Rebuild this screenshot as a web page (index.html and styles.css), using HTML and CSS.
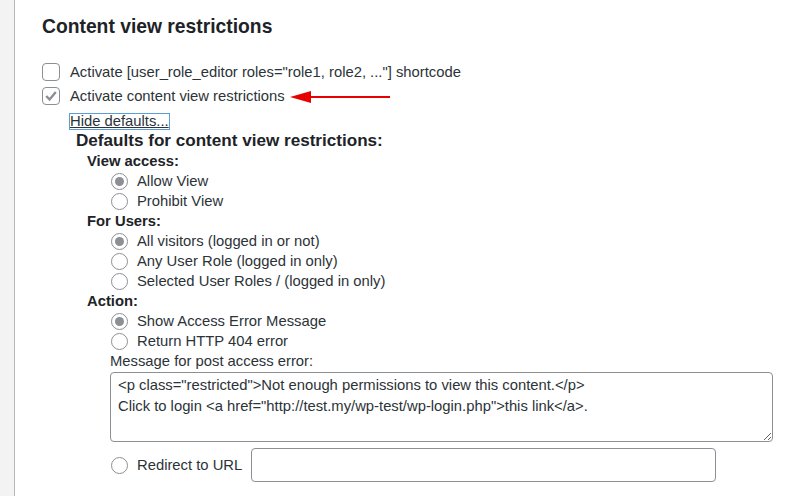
FILE: index.html
```html
<!DOCTYPE html>
<html>
<head>
	<meta charset="utf-8">
	<title>Content view restrictions</title>
	<link rel="stylesheet" href="styles.css">
</head>
<body>
<div id="page">
	<div id="sidebar"></div>
	<div id="content">
		<h2>Content view restrictions</h2>

		<div class="check-row">
			<span class="checkbox"></span>
			<span>Activate [user_role_editor roles="role1, role2, ..."] shortcode</span>
		</div>
		<div class="check-row">
			<span class="checkbox checked">
				<svg width="14" height="14" viewBox="0 0 14 14"><path d="M2.2 7 L5.6 10.4 L11.8 3" fill="none" stroke="#8c8f94" stroke-width="2.4"/></svg>
			</span>
			<span>Activate content view restrictions</span>
			<svg class="arrow" width="102" height="14" viewBox="0 0 102 14"><polygon points="0,7 21,1 21,13" fill="#e60000"/><rect x="20" y="6" width="80" height="2" fill="#e60000"/></svg>
		</div>

		<div id="defaults">
			<div class="row"><span class="toggle">Hide defaults...</span></div>
			<div class="row heading">Defaults for content view restrictions:</div>

			<div class="row group">View access:</div>
			<div class="row opt"><span class="radio checked"></span>Allow View</div>
			<div class="row opt"><span class="radio"></span>Prohibit View</div>

			<div class="row group">For Users:</div>
			<div class="row opt"><span class="radio checked"></span>All visitors (logged in or not)</div>
			<div class="row opt"><span class="radio"></span>Any User Role (logged in only)</div>
			<div class="row opt"><span class="radio"></span>Selected User Roles / (logged in only)</div>

			<div class="row group">Action:</div>
			<div class="row opt"><span class="radio checked"></span>Show Access Error Message</div>
			<div class="row opt"><span class="radio"></span>Return HTTP 404 error</div>

			<div class="message">
				<div class="row">Message for post access error:</div>
				<textarea>&lt;p class="restricted"&gt;Not enough permissions to view this content.&lt;/p&gt;
Click to login &lt;a href="http://test.my/wp-test/wp-login.php"&gt;this link&lt;/a&gt;.</textarea>
			</div>

			<div class="redirect">
				<span class="radio"></span>
				<span>Redirect to URL</span>
				<input type="text" />
			</div>
		</div>
	</div>
</div>
</body>
</html>
```

FILE: styles.css
```css
body {
	margin:0px;
	background-color:#ffffff;
	color:#2c3338;
	font-family:"Liberation Sans", Arial, sans-serif;
	font-size:14.8px;
}

#page {
	display:flex;
	min-height:496px;
}
#sidebar {
	width:14px;
	background-color:#f3f3f3;
	border-right:1px solid #b8b8b8;
}
#content {
	flex:1;
	padding-left:27px;
}

h2 {
	margin:0px;
	margin-top:15px;
	margin-bottom:21px;
	line-height:24px;
	font-size:19.3px;
	font-weight:bold;
	color:#1d2327;
}

.check-row {
	display:flex;
	align-items:center;
	height:24px;
}
.checkbox {
	display:flex;
	align-items:center;
	justify-content:center;
	box-sizing:border-box;
	width:18px;
	height:18px;
	margin-right:10px;
	border:1px solid #8c8f94;
	border-radius:4px;
	background-color:#ffffff;
}
.arrow {
	margin-left:5px;
	margin-top:1px;
}

#defaults {
	padding-top:3px;
	padding-left:27px;
}
.row {
	display:flex;
	align-items:center;
	height:20px;
}
.toggle {
	line-height:15px;
	border:1px solid #5b9dd9;
	text-decoration:underline;
}
.heading {
	padding-left:7px;
	font-size:17.1px;
	font-weight:bold;
	color:#1d2327;
}
.group {
	padding-left:18px;
	font-weight:bold;
	color:#1d2327;
}
.opt {
	padding-left:42px;
}

.radio {
	position:relative;
	box-sizing:border-box;
	width:17px;
	height:17px;
	margin-right:9px;
	border:1px solid #8c8f94;
	border-radius:50%;
	background-color:#ffffff;
}
.radio.checked::after {
	content:"";
	position:absolute;
	left:3px;
	top:3px;
	width:9px;
	height:9px;
	border-radius:50%;
	background-color:#8c8f94;
}

.message {
	padding-left:41px;
}
textarea {
	display:block;
	box-sizing:border-box;
	width:663px;
	height:70px;
	margin-top:1px;
	padding:2px 7px;
	border:1px solid #8c8f94;
	border-radius:4px;
	font-family:"Liberation Sans", Arial, sans-serif;
	font-size:14.8px;
	line-height:21px;
	color:#2c3338;
}

.redirect {
	display:flex;
	align-items:center;
	margin-top:6px;
	padding-left:42px;
}
.redirect input {
	box-sizing:border-box;
	width:465px;
	height:34px;
	margin-left:9px;
	border:1px solid #8c8f94;
	border-radius:4px;
	background-color:#ffffff;
}
```
